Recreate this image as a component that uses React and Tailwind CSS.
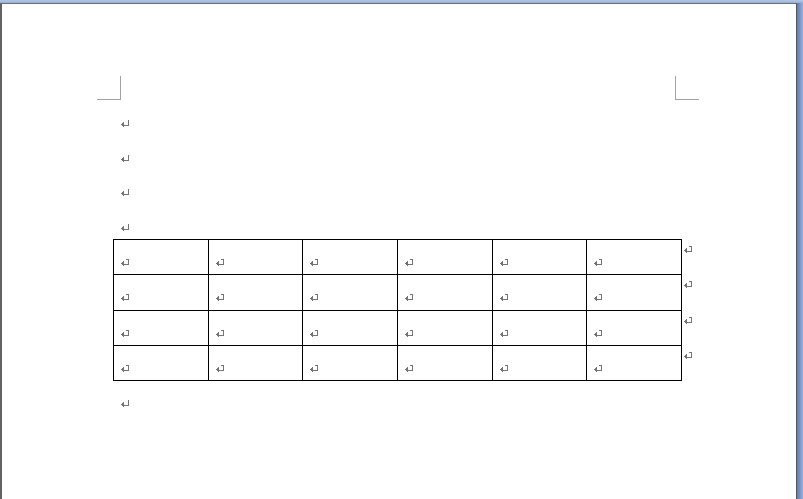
function ReturnMark({ cell = false, className = "" }) {
  return (
    <svg
      width="9"
      height="8"
      viewBox="0 0 9 8"
      className={className}
      shapeRendering="crispEdges"
    >
      <path d="M7.5 0V5H2" stroke="#737373" fill="none" />
      <path d="M0 4.5L3 2V7Z" fill="#737373" />
      <path d="M1 3.5H3V5.5H1Z" fill="#737373" />
      {cell && <path d="M5 0.5H7" stroke="#737373" fill="none" />}
    </svg>
  );
}

const rows = [0, 1, 2, 3];
const cols = [0, 1, 2, 3, 4, 5];

export default function App() {
  return (
    <div className="w-[803px] h-[499px] flex flex-col bg-[#8aa5d2] overflow-hidden">
      <div className="h-[3px] bg-gradient-to-b from-[#b3c6e6] to-[#97b0da]" />
      <div className="flex flex-1 min-h-0">
        <div className="w-[797px] bg-white border-l-2 border-t border-r border-l-[#626262] border-t-[#6e6e6e] border-r-[#585858]">
          {/* corner marks */}
          <div className="mt-[72px] ml-[95px] w-[602px] flex justify-between">
            <div className="w-[24px] h-[24px] border-r border-b border-[#a3a3a3]" />
            <div className="w-[24px] h-[24px] border-l border-b border-[#a3a3a3]" />
          </div>

          {/* empty paragraphs */}
          <div className="ml-[119px] flex flex-col">
            {[0, 1, 2, 3].map((i) => (
              <div key={i} className="h-[34.5px]">
                <ReturnMark className="mt-[20px]" />
              </div>
            ))}
          </div>

          {/* table */}
          <div className="mt-[1px] ml-[111px] flex">
            <div className="w-[569px] grid grid-cols-6 border-t border-l border-black">
              {rows.map((r) =>
                cols.map((c) => (
                  <div
                    key={`${r}_${c}`}
                    className="h-[35.25px] border-r border-b border-black pl-[7px] pt-[19px]"
                  >
                    <ReturnMark cell />
                  </div>
                ))
              )}
            </div>
            <div className="flex flex-col ml-[2px]">
              {rows.map((r) => (
                <div key={r} className="h-[35.25px] pt-[7px]">
                  <ReturnMark cell />
                </div>
              ))}
            </div>
          </div>

          <div className="ml-[119px] mt-[19px]">
            <ReturnMark />
          </div>
        </div>
        <div className="flex-1 bg-gradient-to-r from-[#5a7cb4] via-[#7896c8] to-[#9ab2dc]" />
      </div>
    </div>
  );
}
